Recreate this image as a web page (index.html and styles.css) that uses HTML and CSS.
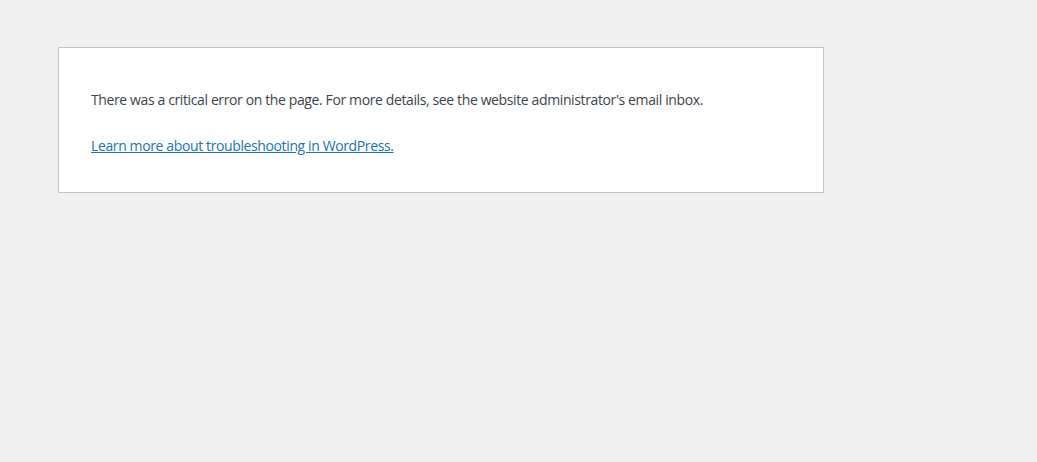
FILE: index.html
```html
<!DOCTYPE html>
<html lang="en-US">
<head>
<meta charset="utf-8">
<title>WordPress &rsaquo; Error</title>
<link rel="stylesheet" href="styles.css">
</head>
<body>
<main class="error-page">
  <p class="message">There was a critical error on the page. For more details, see the website administrator's email inbox.</p>
  <p class="message"><a class="link" href="#">Learn more about troubleshooting in WordPress.</a></p>
</main>
</body>
</html>
```

FILE: styles.css
```css
html {
  background: #f0f0f1;
}
body {
  margin: 0;
  padding: 47px 0 0 58px;
}
.error-page {
  box-sizing: border-box;
  width: 766px;
  background: #fff;
  border: 1px solid #c3c4c7;
  color: #3c434a;
  font-family: "Open Sans", "Noto Sans", sans-serif;
  padding: 16px 32px;
  box-shadow: 0 1px 1px rgba(0, 0, 0, 0.04);
  display: flow-root;
}
.message {
  font-size: 14px;
  line-height: 1.5;
  letter-spacing: -0.38px;
  margin: 25px 0 20px;
}
.link {
  color: #2271b1;
}
```
